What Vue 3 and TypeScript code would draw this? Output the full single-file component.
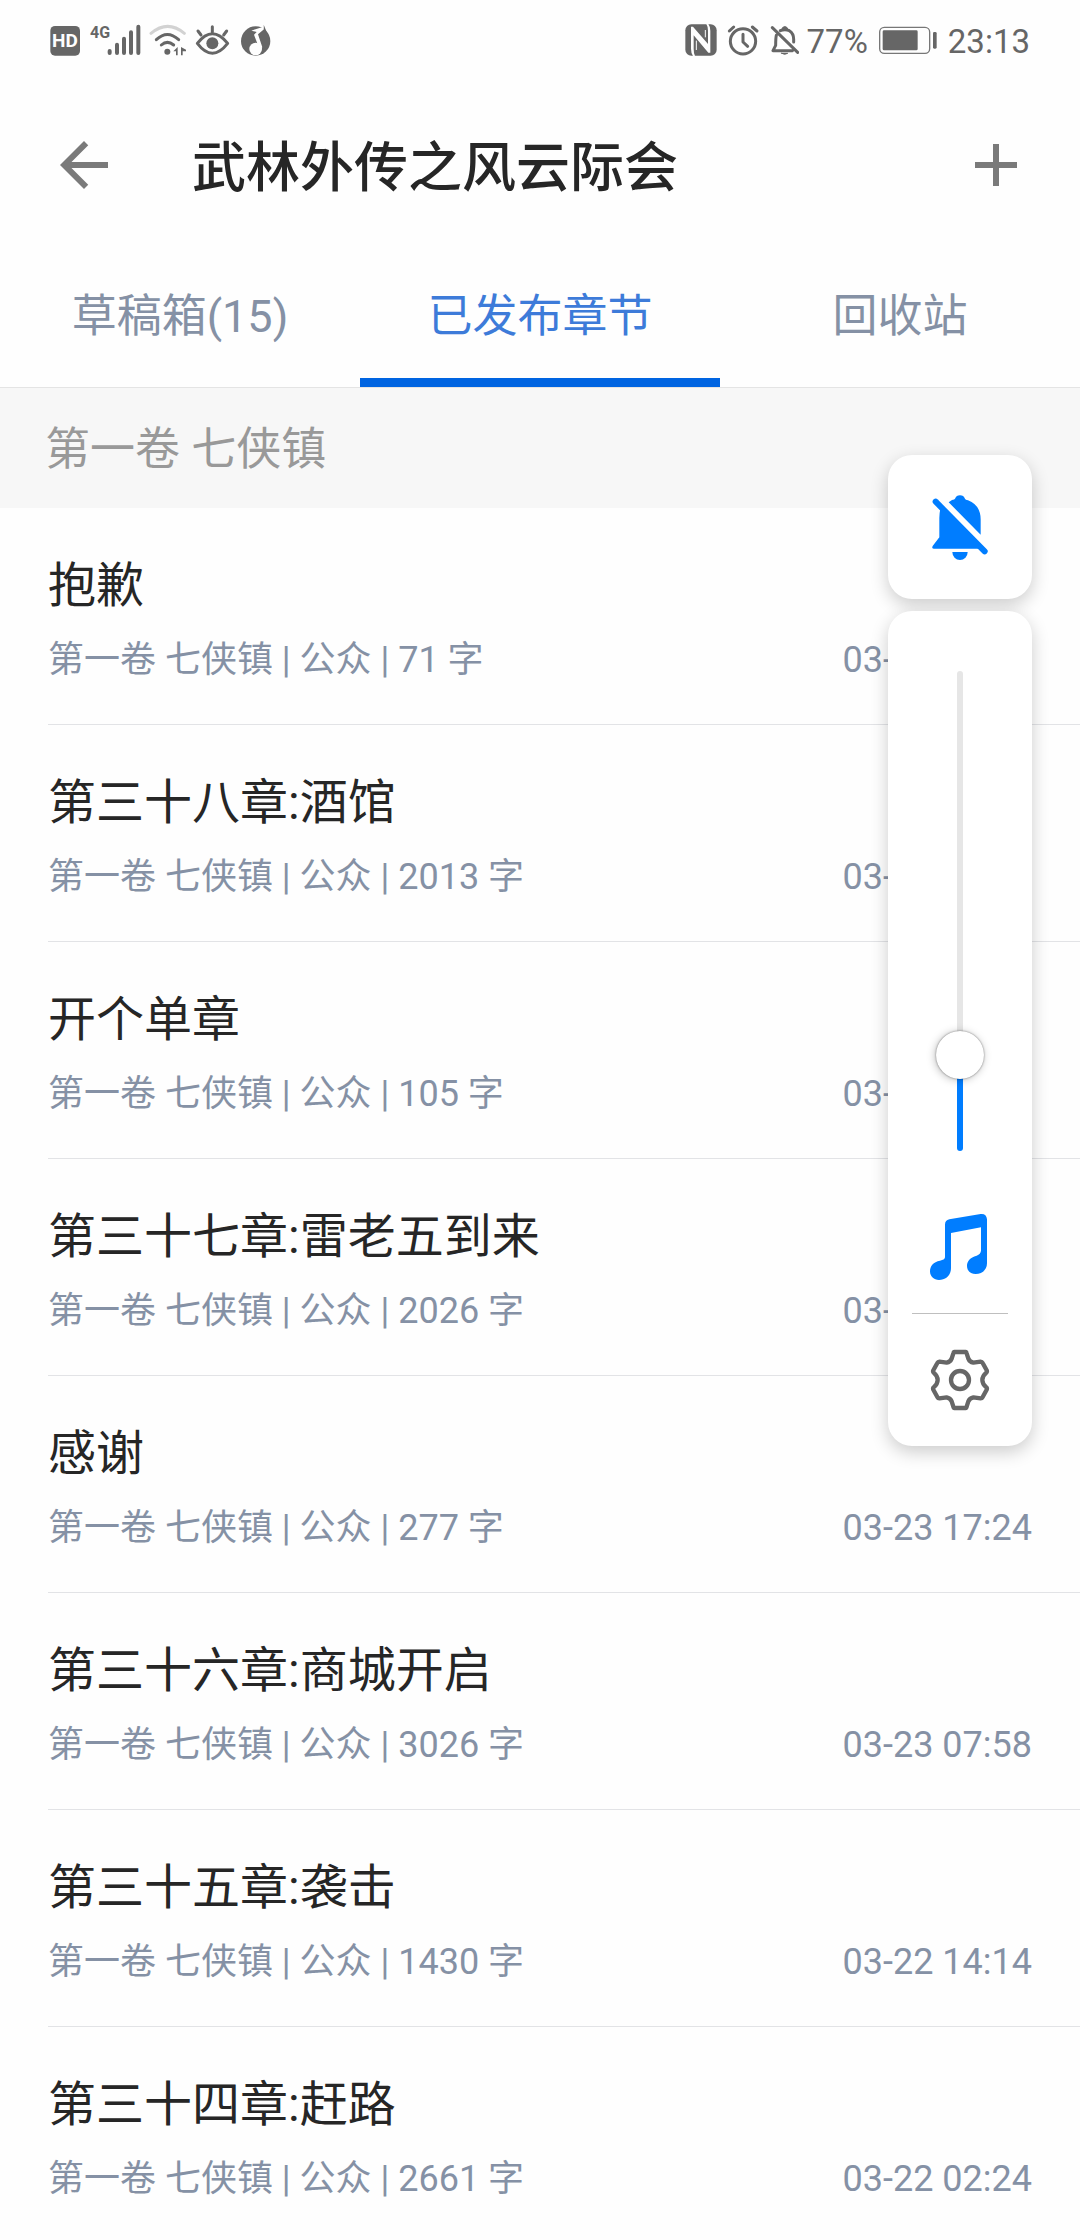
<script setup lang="ts">
import { computed, ref } from 'vue'

interface Chapter {
  title: string
  words: number
  date: string
}

const volume = '第一卷 七侠镇'
const tabs = ['草稿箱(15)', '已发布章节', '回收站']
const activeTab = ref(1)

const chapters: Chapter[] = [
  { title: '抱歉', words: 71, date: '03-25 21:36' },
  { title: '第三十八章:酒馆', words: 2013, date: '03-25 12:10' },
  { title: '开个单章', words: 105, date: '03-24 20:45' },
  { title: '第三十七章:雷老五到来', words: 2026, date: '03-24 12:02' },
  { title: '感谢', words: 277, date: '03-23 17:24' },
  { title: '第三十六章:商城开启', words: 3026, date: '03-23 07:58' },
  { title: '第三十五章:袭击', words: 1430, date: '03-22 14:14' },
  { title: '第三十四章:赶路', words: 2661, date: '03-22 02:24' },
]

const maxLevel = 12
const level = ref(2)
const filled = computed(() => `${10 + (level.value / maxLevel) * 80}%`)
</script>

<template>
  <div class="screen">
    <div class="status">
      <div class="status-group">
        <svg class="icon" width="32" height="32" viewBox="60 72 96 96">
          <rect x="61" y="78" width="89" height="89" rx="14" fill="#666" />
          <text x="105" y="142" text-anchor="middle" class="hd">HD</text>
        </svg>
        <div class="cell">
          <span class="network">4G</span>
          <svg class="icon" width="34" height="32" viewBox="231 72 102 96" stroke="#666" stroke-width="12" stroke-linecap="round">
            <path d="M239 153v6M261 134v25M282 116v43M303 97v62M325 80v79" />
          </svg>
        </div>
        <svg class="icon" width="38" height="32" viewBox="357 72 114 96" fill="none" stroke-width="9" stroke-linecap="round">
          <path d="M363 100Q413 58 463 100" stroke="#d2d2d2" />
          <path d="M379 119Q412 88 446 119M394 135Q412 119 431 135" stroke="#666" />
          <circle cx="412" cy="155" r="9" fill="#666" />
          <path d="M430 154l13-13v25h-5v-12zM453 141v25h5v-12h10v-5z" fill="#666" />
        </svg>
        <svg class="icon" width="35" height="32" viewBox="495 72 105 96" fill="none" stroke="#666" stroke-width="9" stroke-linecap="round" stroke-linejoin="round">
          <path d="M502 130Q547 72 593 130Q547 189 502 130Z" />
          <path d="M547 80v16M504 93l9 12M590 93l-9 12" />
          <circle cx="547" cy="130" r="18" fill="#666" stroke="none" />
        </svg>
        <svg class="icon" width="36" height="32" viewBox="624 72 108 96">
          <circle cx="677" cy="123" r="44" fill="#666" />
          <path d="M664 92L700 80L702 88L684 103L697 142L688 146L672 104L680 96Z" fill="#fefefe" />
          <circle cx="677" cy="147" r="19" fill="#fefefe" />
          <path d="M701 74L711 98L702 92Z" fill="#666" />
        </svg>
      </div>
      <div class="status-group">
        <svg class="icon" width="32" height="32" viewBox="48 72 96 96">
          <rect x="49" y="73" width="94" height="94" rx="18" fill="#666" />
          <path d="M66 80H72L117 132V92Q117 80 112 72H118Q124 80 124 92V158H118L74 106V146Q74 160 78 168H72Q66 160 66 146Z" fill="#fefefe" />
          <path d="M82 122V150M109 90V112" stroke="#fefefe" stroke-width="3" />
        </svg>
        <svg class="icon" width="36" height="32" viewBox="168 72 108 96" fill="none" stroke="#666" stroke-width="9" stroke-linecap="round" stroke-linejoin="round">
          <circle cx="222" cy="124" r="38" />
          <path d="M222 103v23l14 13M181 93l13-12M250 81l14 12" />
        </svg>
        <svg class="icon" width="30" height="32" viewBox="300 72 90 96" fill="none" stroke="#666" stroke-width="9" stroke-linecap="round" stroke-linejoin="round">
          <path d="M310 83l76 74M322 106Q320 114 320 136L312 152H370M334 92Q348 86 361 92Q374 100 374 118V126" />
          <path d="M338 88a10 12 0 0 1 19 0zM338 160h18q-9 6-18 0z" fill="#666" stroke-width="3" />
        </svg>
        <span class="reading">77%</span>
        <svg class="icon" width="64" height="32" viewBox="618 72 192 96">
          <rect x="629" y="82" width="150" height="78" rx="14" fill="none" stroke="#777" stroke-width="4" />
          <rect x="638" y="91" width="105" height="60" rx="4" fill="#666" />
          <rect x="789" y="96" width="11" height="50" rx="4" fill="#666" />
        </svg>
        <span class="reading">23:13</span>
      </div>
    </div>

    <header class="app-bar">
      <button class="icon-button" type="button" aria-label="返回">
        <svg width="72" height="72" viewBox="0 0 24 24" fill="#7a7a7a"><path d="M20 11H7.83l5.59-5.59L12 4l-8 8 8 8 1.41-1.41L7.83 13H20z" /></svg>
      </button>
      <h1>武林外传之风云际会</h1>
      <button class="icon-button" type="button" aria-label="新建章节">
        <svg width="72" height="72" viewBox="0 0 24 24" fill="#7a7a7a"><path d="M19 13h-6v6h-2v-6H5v-2h6V5h2v6h6z" /></svg>
      </button>
    </header>

    <nav class="tabs" role="tablist">
      <button
        v-for="(tab, i) in tabs"
        :key="tab"
        class="tab"
        :class="{ active: i === activeTab }"
        type="button"
        role="tab"
        :aria-selected="i === activeTab"
        @click="activeTab = i"
      >{{ tab }}</button>
    </nav>

    <main>
      <h2 class="volume">{{ volume }}</h2>
      <ul class="chapters">
        <li v-for="chapter in chapters" :key="chapter.title" class="chapter">
          <a class="chapter-title" href="#">{{ chapter.title }}</a>
          <div class="meta">
            <span>{{ volume }} | 公众 | {{ chapter.words }} 字</span>
            <time>{{ chapter.date }}</time>
          </div>
        </li>
      </ul>
    </main>

    <aside class="volume-control">
      <button class="card mute" type="button" aria-label="静音">
        <svg class="icon" width="72" height="72" viewBox="192 183 216 216" fill="#007dff">
          <path d="M241 236Q238 250 238 264V322L218 348Q214 356 222 356H366Z" />
          <path d="M266 217L276 210Q284 209 285 206A16 16 0 0 1 315 206Q316 209 324 211Q362 226 362 268V314Z" />
          <path d="M277 366H323A23 24 0 0 1 277 366Z" />
          <path d="M227 215L374 364" stroke="#007dff" stroke-width="18" stroke-linecap="round" />
        </svg>
      </button>
      <div class="card panel">
        <input
          v-model.number="level"
          class="slider"
          type="range"
          min="0"
          :max="maxLevel"
          aria-label="媒体音量"
          :style="{ '--filled': filled }"
        />
        <button class="icon-button media" type="button" aria-label="媒体">
          <svg class="icon" width="72" height="72" viewBox="192 93 216 216" fill="#007dff">
            <path d="M255 232Q254 240 240 242C220 246 210 258 210 274C210 290 222 300 237 300C256 300 273 288 273 264V159L363 142V212Q362 222 350 227C330 232 321 244 321 258C321 274 333 282 347 282C366 282 381 270 381 250V118Q379 100 362 102L268 118Q255 121 255 134Z" />
          </svg>
        </button>
        <hr />
        <button class="icon-button" type="button" aria-label="声音设置">
          <svg class="icon" width="72" height="72" viewBox="192 492 216 216" fill="none" stroke="#666" stroke-width="13" stroke-linejoin="round">
            <path d="M283 516H317Q319 516 320 520L325 536Q329 546 340 548L362 545Q366 545 368 549L380 571Q382 575 379 578Q367 588 367 600Q367 612 379 622Q382 625 380 629L368 651Q366 655 362 655L340 652Q329 654 325 664L320 680Q319 684 317 684H283Q281 684 280 680L275 664Q271 654 260 652L238 655Q234 655 232 651L220 629Q218 625 221 622Q233 612 233 600Q233 588 221 578Q218 575 220 571L232 549Q234 545 238 545L260 548Q271 546 275 536L280 520Q281 516 283 516Z" />
            <circle cx="300" cy="600" r="27" />
          </svg>
        </button>
      </div>
    </aside>
  </div>
</template>

<style>
body {
  margin: 0;
  background: #fefefe;
}
</style>

<style scoped>
.screen {
  position: relative;
  font-family: Roboto, 'Noto Sans CJK SC', sans-serif;
  color: #262626;
}

button {
  margin: 0;
  padding: 0;
  border: 0;
  background: none;
  font: inherit;
  color: inherit;
}

svg {
  display: block;
  flex: none;
}

.status {
  display: flex;
  justify-content: space-between;
  align-items: center;
  height: 80px;
  padding: 0 50px;
  font-size: 33px;
  line-height: 40px;
  color: #666;
}

.status-group {
  display: flex;
  align-items: center;
  gap: 8px;
}

.reading {
  padding-top: 3px;
}

.hd {
  font-size: 57px;
  font-weight: 700;
  fill: #fefefe;
}

.cell {
  display: flex;
  align-items: flex-start;
}

.network {
  width: 17px;
  font-size: 16px;
  font-weight: 700;
  line-height: 18px;
}

.app-bar {
  display: flex;
  align-items: center;
  height: 170px;
  padding: 0 48px;
}

.app-bar h1 {
  flex: 1;
  margin: 0 0 0 72px;
  padding-top: 7px;
  font-size: 54px;
  font-weight: 500;
  line-height: 72px;
}

.tabs {
  display: flex;
  height: 137px;
  border-bottom: 1px solid #e4e4e4;
}

.tab {
  flex: 1;
  padding-bottom: 3px;
  border-bottom: 9px solid transparent;
  font-size: 45px;
  color: #8591a5;
}

.tab.active {
  border-bottom-color: #0064e1;
  color: #3d7bd9;
}

.volume {
  margin: 0;
  padding: 4px 45px 0;
  background: #f7f7f7;
  font-size: 45px;
  font-weight: 400;
  line-height: 116px;
  color: #999;
}

.chapters {
  margin: 0;
  padding: 0 0 0 48px;
  list-style: none;
}

.chapter {
  padding: 50px 48px 42px 0;
  border-bottom: 1px solid #e2e3e6;
}

.chapter:last-child {
  padding-bottom: 38px;
  border-bottom: 0;
}

.chapter-title {
  display: block;
  font-size: 48px;
  line-height: 56px;
  color: inherit;
  text-decoration: none;
}

.meta {
  display: flex;
  justify-content: space-between;
  margin-top: 24px;
  font-size: 36px;
  line-height: 44px;
  color: #8591a5;
}

.volume-control {
  position: absolute;
  top: 455px;
  right: 48px;
  display: flex;
  flex-direction: column;
  gap: 12px;
  width: 144px;
}

.card {
  display: flex;
  flex-direction: column;
  align-items: center;
  border-radius: 24px;
  background: #fff;
  box-shadow: 0 6px 18px rgba(0, 0, 0, 0.2);
}

.mute {
  justify-content: center;
  height: 144px;
}

.panel {
  padding: 60px 0 30px;
}

.slider {
  -webkit-appearance: none;
  appearance: none;
  writing-mode: vertical-lr;
  direction: rtl;
  width: 48px;
  height: 480px;
  margin: 0;
  background: none;
}

.slider::-webkit-slider-runnable-track {
  width: 6px;
  height: 480px;
  border-radius: 3px;
  background: linear-gradient(to top, #007dff var(--filled), #e6e6e6 var(--filled));
}

.slider::-webkit-slider-thumb {
  -webkit-appearance: none;
  appearance: none;
  width: 48px;
  height: 48px;
  margin-left: -21px;
  border-radius: 50%;
  background: #fff;
  box-shadow: 0 0 2px rgba(0, 0, 0, 0.5), -1px 1px 8px rgba(0, 0, 0, 0.25);
}

.media {
  margin: 60px 0 30px;
}

hr {
  width: 96px;
  height: 1px;
  margin: 0 0 30px;
  border: 0;
  background: #bfbfbf;
}
</style>
